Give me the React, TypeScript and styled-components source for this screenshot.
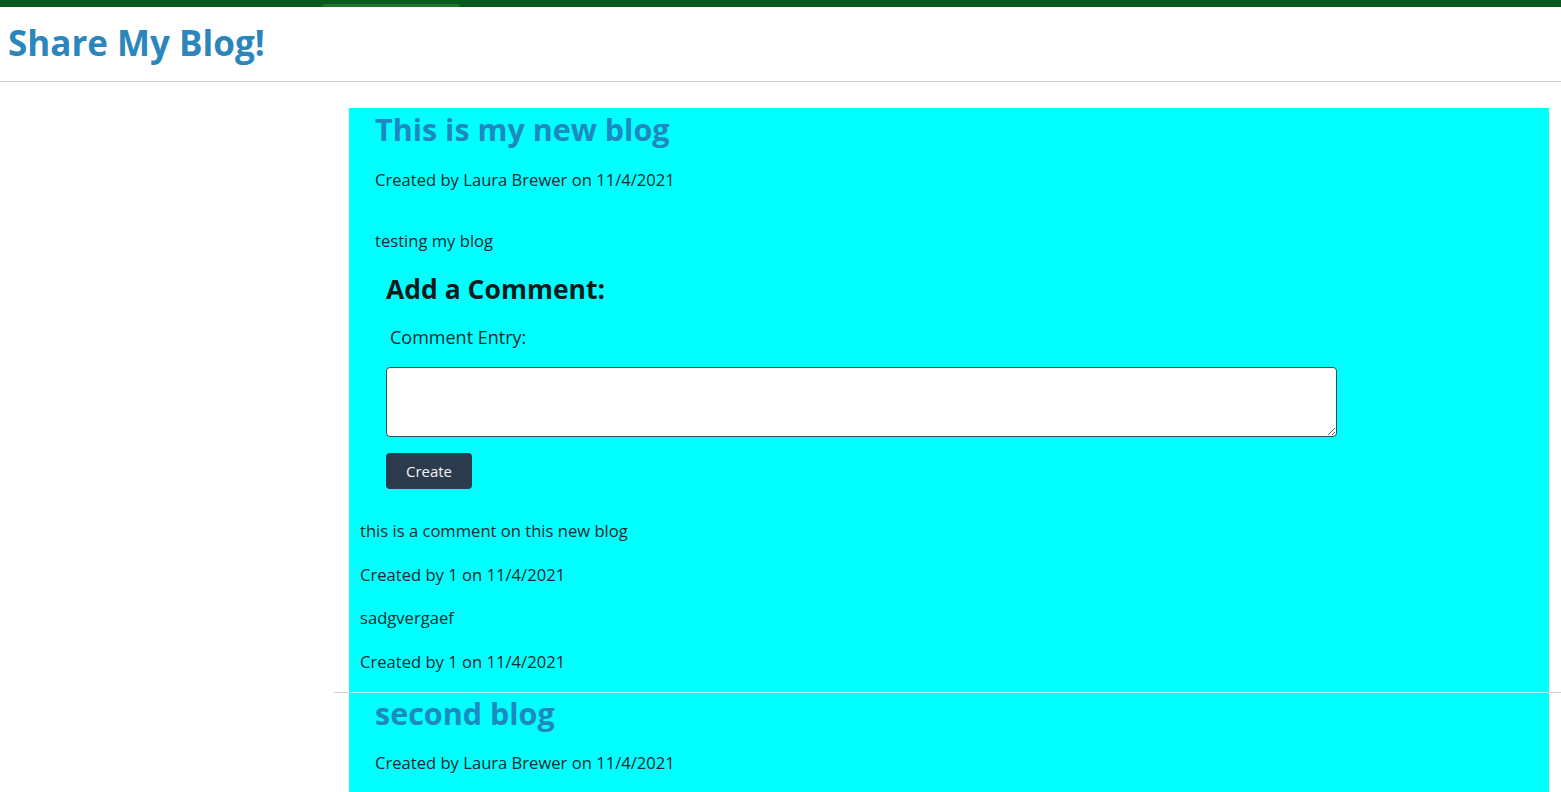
import React from "react";
import styled, { createGlobalStyle } from "styled-components";

const Global = createGlobalStyle`
  html, body { margin: 0; padding: 0; background: #ffffff; }
  body {
    font-family: "Open Sans", "Noto Sans", "Liberation Sans", sans-serif;
    color: #212529;
    overflow: hidden;
  }
  * { box-sizing: border-box; }
`;

const TopBar = styled.div`
  height: 7px;
  background: #0a5a1d;
  display: flex;
  align-items: flex-end;
  padding-left: 322px;
`;

const TopTab = styled.div`
  width: 138px;
  height: 3px;
  background: #1f7431;
  border-radius: 6px 6px 0 0;
`;

const Header = styled.header`
  height: 75px;
  border-bottom: 1px solid #cccccc;
  padding: 0 8px;
  display: flex;
  align-items: center;
`;

const SiteTitle = styled.h1`
  margin: 0 0 2px 0;
  font-size: 35px;
  font-weight: 700;
  color: #2a86bb;
  line-height: 1.2;
`;

const Main = styled.main`
  padding: 26px 0 0 334px;
  display: flex;
  flex-direction: column;
`;

const Post = styled.article`
  margin: 0 12px 0 15px;
  padding-bottom: 17px;
  background: #00ffff;
  display: flex;
  flex-direction: column;
`;

const PostBody = styled.div<{ $pad?: number }>`
  padding: ${(p) => p.$pad ?? 2}px 0 0 26px;
  display: flex;
  flex-direction: column;
`;

const PostTitle = styled.h2`
  margin: 0;
  font-size: 30.5px;
  font-weight: 700;
  line-height: 38px;
  color: #1f88c0;
`;

const Text = styled.p<{ $top?: number }>`
  margin: ${(p) => p.$top ?? 17.6}px 0 0 0;
  font-size: 16.6px;
  line-height: 26px;
  color: #1c2a2c;
`;

const CommentForm = styled.form`
  margin: 20px 0 0 11px;
  display: flex;
  flex-direction: column;
  align-items: flex-start;
`;

const FormHeading = styled.h3`
  margin: 0;
  font-size: 26.5px;
  font-weight: 700;
  line-height: 31px;
  color: #121a1c;
`;

const Label = styled.label`
  margin: 19px 0 0 4px;
  font-size: 18px;
  line-height: 26px;
  color: #1c2a2c;
`;

const Entry = styled.textarea`
  margin-top: 17px;
  width: 951px;
  height: 70px;
  border: 1px solid #2f4f50;
  border-radius: 4px;
  background: #ffffff;
  font-family: inherit;
  font-size: 16px;
  resize: vertical;
  outline: none;
`;

const CreateButton = styled.button`
  margin-top: 16px;
  width: 86px;
  height: 36px;
  border: none;
  border-radius: 4px;
  background: #2c3a4e;
  color: #f1f4f6;
  font-family: inherit;
  font-size: 15px;
  cursor: pointer;
`;

const CommentList = styled.div`
  padding: 12px 0 0 11px;
  display: flex;
  flex-direction: column;
`;

const Divider = styled.hr`
  margin: 0;
  border: none;
  height: 1px;
  background: linear-gradient(
    to right,
    #d2d2d2 0,
    #d2d2d2 15px,
    #b8f6f6 15px,
    #b8f6f6 calc(100% - 12px),
    #d2d2d2 calc(100% - 12px)
  );
`;

const comments = [
  { text: "this is a comment on this new blog", by: "1", date: "11/4/2021" },
  { text: "sadgvergaef", by: "1", date: "11/4/2021" },
];

export default function App() {
  return (
    <>
      <Global />
      <TopBar>
        <TopTab />
      </TopBar>
      <Header>
        <SiteTitle>Share My Blog!</SiteTitle>
      </Header>
      <Main>
        <Post>
          <PostBody>
            <PostTitle>This is my new blog</PostTitle>
            <Text $top={18.6}>Created by Laura Brewer on 11/4/2021</Text>
            <Text $top={35}>testing my blog</Text>
            <CommentForm onSubmit={(e) => e.preventDefault()}>
              <FormHeading>Add a Comment:</FormHeading>
              <Label>Comment Entry:</Label>
              <Entry />
              <CreateButton type="submit">Create</CreateButton>
            </CommentForm>
          </PostBody>
          <CommentList>
            {comments.map((c, i) => (
              <React.Fragment key={i}>
                <Text $top={i === 0 ? 17 : 17.6}>{c.text}</Text>
                <Text $top={18}>
                  Created by {c.by} on {c.date}
                </Text>
              </React.Fragment>
            ))}
          </CommentList>
        </Post>
        <Divider />
        <Post>
          <PostBody $pad={1}>
            <PostTitle>second blog</PostTitle>
            <Text $top={17.6}>Created by Laura Brewer on 11/4/2021</Text>
          </PostBody>
        </Post>
      </Main>
    </>
  );
}
